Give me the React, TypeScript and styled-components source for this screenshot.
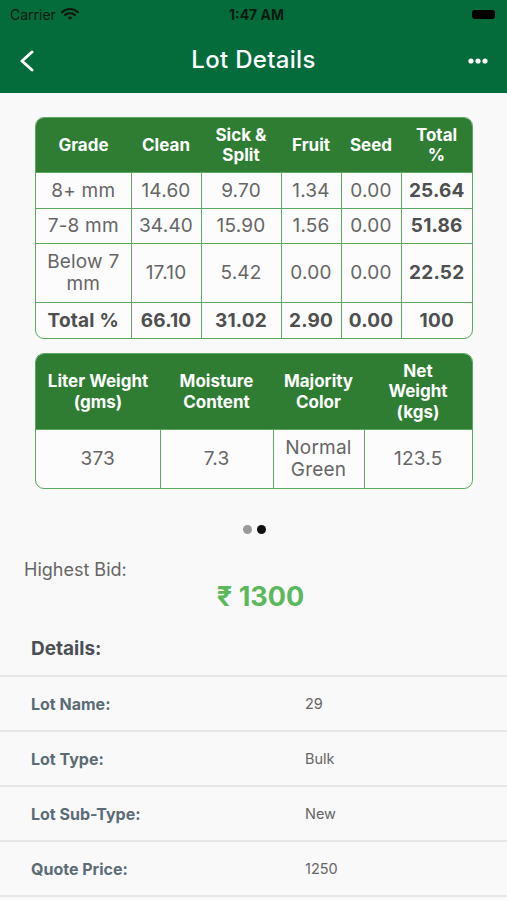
import React from 'react'
import styled, { createGlobalStyle } from 'styled-components'

const Global = createGlobalStyle`
	body {
		margin: 0;
		background: #f9f9f9;
		font-family: Inter, 'Liberation Sans', sans-serif;
	}
`

const Screen = styled.div`
	width: 507px;
	height: 900px;
	overflow: hidden;
	background: #f9f9f9;
`

const StatusBar = styled.div`
	height: 28px;
	background: #046b3b;
	display: grid;
	grid-template-columns: 1fr auto 1fr;
	align-items: center;
	padding: 0 10px;
	font-size: 14px;
	color: #0a1a10;
`

const Carrier = styled.div`
	display: flex;
	align-items: center;
	gap: 5px;
`

const Time = styled.div`
	font-weight: 700;
	padding-left: 6px;
`

const Battery = styled.div`
	justify-self: end;
	width: 23px;
	height: 9px;
	border-radius: 3px;
	background: #000;
	margin-right: 2px;
`

const NavBar = styled.div`
	height: 65px;
	background: #046b3b;
	display: grid;
	grid-template-columns: 60px 1fr 60px;
	align-items: center;
	color: #fff;
`

const Title = styled.div`
	text-align: center;
	font-size: 24px;
	font-weight: 500;
	letter-spacing: 0.3px;
	padding-bottom: 2px;
`

const NavIcon = styled.div<{ $end?: boolean }>`
	display: flex;
	justify-content: ${p => (p.$end ? 'flex-end' : 'flex-start')};
	padding: ${p => (p.$end ? '0 19px 0 0' : '0 0 0 19px')};
`

const Content = styled.div`
	padding: 24px 34px 0 35px;
	display: flex;
	flex-direction: column;
	gap: 14px;
`

const TableBox = styled.div`
	border: 1.5px solid #5aa95e;
	border-radius: 9px;
	overflow: hidden;
	background: #fcfcfc;
`

const Table = styled.table`
	width: 100%;
	border-collapse: collapse;
	table-layout: fixed;
`

const Head = styled.th<{ $h: number }>`
	background: #2e7d32;
	color: #fff;
	font-size: 17px;
	font-weight: 700;
	line-height: 20.5px;
	height: ${p => p.$h}px;
	padding: 0 2px;
	text-align: center;
	vertical-align: middle;
	white-space: nowrap;
`

const Cell = styled.td<{ $bold?: boolean; $h: number }>`
	height: ${p => p.$h}px;
	border: 1.5px solid #5aa95e;
	text-align: center;
	vertical-align: middle;
	padding: 0 2px;
	font-size: 19px;
	line-height: 22px;
	letter-spacing: 0.2px;
	white-space: nowrap;
	color: ${p => (p.$bold ? '#4f4f4f' : '#666')};
	font-weight: ${p => (p.$bold ? 700 : 400)};
	&:first-child {
		border-left: 0;
	}
	&:last-child {
		border-right: 0;
	}
	tr:last-child > & {
		border-bottom: 0;
	}
`

const Dots = styled.div`
	display: flex;
	justify-content: center;
	gap: 5px;
	margin: 36px 0 0;
	padding-left: 1px;
`

const Dot = styled.span<{ $active?: boolean }>`
	width: 9px;
	height: 9px;
	border-radius: 50%;
	background: ${p => (p.$active ? '#111' : '#9a9a9a')};
`

const Bid = styled.div`
	padding: 25px 0 0 24px;
`

const BidLabel = styled.div`
	font-size: 18px;
	color: #666;
	line-height: 22px;
`

const BidValue = styled.div`
	text-align: center;
	font-size: 27px;
	font-weight: 700;
	color: #5cb85c;
	line-height: 32px;
	padding-right: 10px;
`

const DetailsTitle = styled.div`
	padding: 25px 31px 15px;
	font-size: 19px;
	font-weight: 700;
	color: #4a4f55;
	line-height: 22px;
	border-bottom: 2px solid #e6e6e6;
`

const Row = styled.div`
	height: 53px;
	display: grid;
	grid-template-columns: 274px 1fr;
	align-items: center;
	padding-left: 31px;
	border-bottom: 2px solid #e6e6e6;
`

const Label = styled.div`
	font-size: 16px;
	font-weight: 700;
	color: #5b6c77;
`

const Value = styled.div`
	font-size: 14.5px;
	color: #666;
`

const grades: React.ReactNode[][] = [
	['8+ mm', '14.60', '9.70', '1.34', '0.00', '25.64'],
	['7-8 mm', '34.40', '15.90', '1.56', '0.00', '51.86'],
	[<>Below 7<br />mm</>, '17.10', '5.42', '0.00', '0.00', '22.52'],
	['Total %', '66.10', '31.02', '2.90', '0.00', '100'],
]
const rowHeights = [35, 34, 58, 35]

const details = [
	['Lot Name:', '29'],
	['Lot Type:', 'Bulk'],
	['Lot Sub-Type:', 'New'],
	['Quote Price:', '1250'],
]

const Wifi = () => (
	<svg width="18" height="12" viewBox="0 0 18 12">
		<path d="M1 4.2a11.5 11.5 0 0 1 16 0" stroke="#0a1a10" strokeWidth="2.2" fill="none" strokeLinecap="round" />
		<path d="M4 7.1a7.2 7.2 0 0 1 10 0" stroke="#0a1a10" strokeWidth="2.2" fill="none" strokeLinecap="round" />
		<path d="M6.6 9.6a3.4 3.4 0 0 1 4.8 0L9 12z" fill="#0a1a10" />
	</svg>
)

export default function App() {
	return (
		<Screen>
			<Global />
			<StatusBar>
				<Carrier>
					Carrier <Wifi />
				</Carrier>
				<Time>1:47 AM</Time>
				<Battery />
			</StatusBar>
			<NavBar>
				<NavIcon>
					<svg width="16" height="22" viewBox="0 0 16 22">
						<path d="M13 2L3 11l10 9" stroke="#fff" strokeWidth="3" fill="none" strokeLinecap="round" strokeLinejoin="round" />
					</svg>
				</NavIcon>
				<Title>Lot Details</Title>
				<NavIcon $end>
					<svg width="20" height="6" viewBox="0 0 20 6">
						<circle cx="3" cy="3" r="2.6" fill="#fff" />
						<circle cx="10" cy="3" r="2.6" fill="#fff" />
						<circle cx="17" cy="3" r="2.6" fill="#fff" />
					</svg>
				</NavIcon>
			</NavBar>
			<Content>
				<TableBox>
					<Table>
						<colgroup>
							<col style={{ width: 95 }} />
							<col style={{ width: 70 }} />
							<col style={{ width: 80 }} />
							<col style={{ width: 60 }} />
							<col style={{ width: 60 }} />
							<col />
						</colgroup>
						<thead>
							<tr>
								<Head $h={54}>Grade</Head>
								<Head $h={54}>Clean</Head>
								<Head $h={54}>Sick &amp;<br />Split</Head>
								<Head $h={54}>Fruit</Head>
								<Head $h={54}>Seed</Head>
								<Head $h={54}>Total<br />%</Head>
							</tr>
						</thead>
						<tbody>
							{grades.map((r, i) => (
								<tr key={i}>
									{r.map((v, j) => (
										<Cell
											key={j}
											$h={rowHeights[i]}
											$bold={i === 3 || j === 5}
										>
											{v}
										</Cell>
									))}
								</tr>
							))}
						</tbody>
					</Table>
				</TableBox>
				<TableBox>
					<Table>
						<colgroup>
							<col style={{ width: 124 }} />
							<col style={{ width: 113 }} />
							<col style={{ width: 91 }} />
							<col />
						</colgroup>
						<thead>
							<tr>
								<Head $h={75}>Liter Weight<br />(gms)</Head>
								<Head $h={75}>Moisture<br />Content</Head>
								<Head $h={75}>Majority<br />Color</Head>
								<Head $h={75}>Net<br />Weight<br />(kgs)</Head>
							</tr>
						</thead>
						<tbody>
							<tr>
								<Cell $h={58}>373</Cell>
								<Cell $h={58}>7.3</Cell>
								<Cell $h={58}>Normal<br />Green</Cell>
								<Cell $h={58}>123.5</Cell>
							</tr>
						</tbody>
					</Table>
				</TableBox>
			</Content>
			<Dots>
				<Dot />
				<Dot $active />
			</Dots>
			<Bid>
				<BidLabel>Highest Bid:</BidLabel>
				<BidValue>₹ 1300</BidValue>
			</Bid>
			<DetailsTitle>Details:</DetailsTitle>
			{details.map(([l, v]) => (
				<Row key={l}>
					<Label>{l}</Label>
					<Value>{v}</Value>
				</Row>
			))}
		</Screen>
	)
}
